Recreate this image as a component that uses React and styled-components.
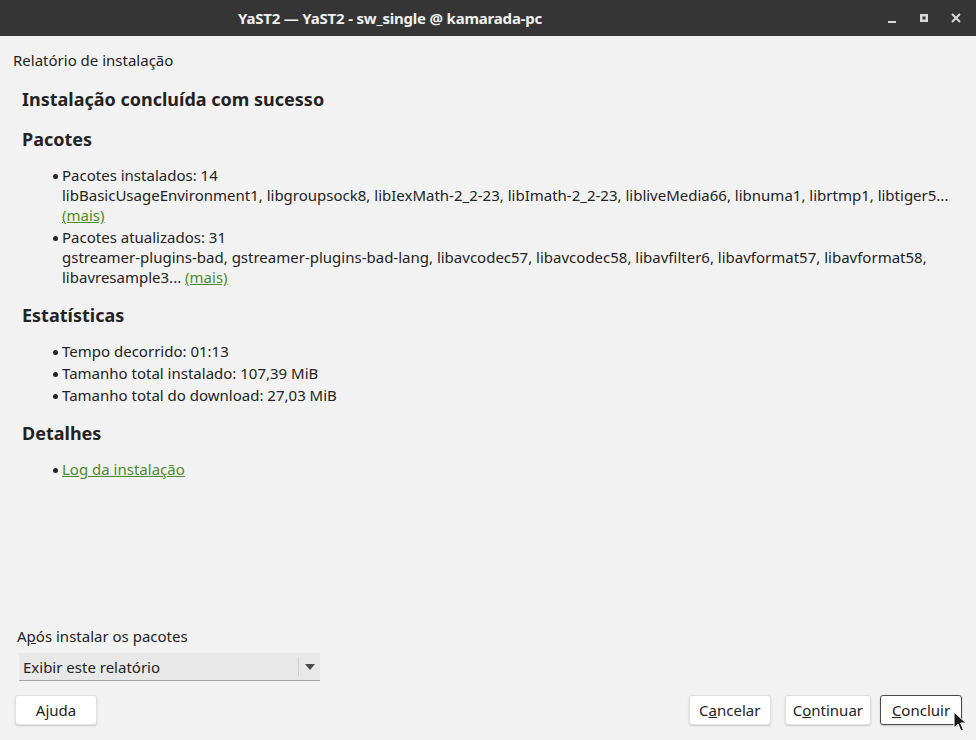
import React from 'react';
import styled, { createGlobalStyle } from 'styled-components';

const GlobalStyle = createGlobalStyle`
  html, body {
    margin: 0;
    padding: 0;
    background: #f2f2f2;
  }
  body {
    font-family: "Noto Sans", "Open Sans", sans-serif;
    color: #232323;
  }
`;

const installed = 'libBasicUsageEnvironment1, libgroupsock8, libIexMath-2_2-23, libImath-2_2-23, libliveMedia66, libnuma1, librtmp1, libtiger5...';
const updated = 'gstreamer-plugins-bad, gstreamer-plugins-bad-lang, libavcodec57, libavcodec58, libavfilter6, libavformat57, libavformat58, libavresample3...';

function App() {
  return (
    <>
      <GlobalStyle />
      <Window>
        <TitleBar>
          <Title>YaST2 — YaST2 - sw_single @ kamarada-pc</Title>
          <WinButtons>
            <svg width="12" height="12" viewBox="0 0 12 12">
              <rect x="2" y="9" width="8" height="2" fill="#d8d8d8" />
            </svg>
            <svg width="12" height="12" viewBox="0 0 12 12">
              <rect x="2" y="2" width="8" height="8" fill="#d8d8d8" />
              <rect x="4.5" y="4.5" width="3" height="3" fill="#353535" />
            </svg>
            <svg width="12" height="12" viewBox="0 0 12 12">
              <path d="M2 2 L10 10 M10 2 L2 10" stroke="#d8d8d8" strokeWidth="2" />
            </svg>
          </WinButtons>
        </TitleBar>

        <Body>
          <Caption>Relatório de instalação</Caption>
          <Report>
            <Heading>Instalação concluída com sucesso</Heading>

            <Heading>Pacotes</Heading>
            <List>
              <Item>
                Pacotes instalados: 14
                <br />
                {installed}
                <br />
                <Link>(mais)</Link>
              </Item>
              <Item>
                Pacotes atualizados: 31
                <br />
                {updated} <Link>(mais)</Link>
              </Item>
            </List>

            <Heading>Estatísticas</Heading>
            <List>
              <Item>Tempo decorrido: 01:13</Item>
              <Item>Tamanho total instalado: 107,39 MiB</Item>
              <Item>Tamanho total do download: 27,03 MiB</Item>
            </List>

            <Heading>Detalhes</Heading>
            <List>
              <Item><Link>Log da instalação</Link></Item>
            </List>
          </Report>

          <AfterBlock>
            <FieldLabel>A<u>p</u>ós instalar os pacotes</FieldLabel>
            <Combo>
              <span>Exibir este relatório</span>
              <ComboArrow>
                <svg width="10" height="6" viewBox="0 0 10 6">
                  <path d="M0 0 H10 L5 6 Z" fill="#4a4a4a" />
                </svg>
              </ComboArrow>
            </Combo>
          </AfterBlock>

          <Footer>
            <Button>Ajuda</Button>
            <Spacer />
            <Button $spaced>C<u>a</u>ncelar</Button>
            <Button>C<u>o</u>ntinuar</Button>
            <Button $focused><u>C</u>oncluir</Button>
          </Footer>
        </Body>

        <Cursor width="14" height="22" viewBox="0 0 14 22">
          <path d="M1 1 L1 17 L5 13 L8 20 L10.5 19 L7.5 12 L13 12 Z" fill="#1a1a1a" stroke="#ffffff" strokeWidth="1" />
        </Cursor>
      </Window>
    </>
  );
}

const Window = styled.div`
  position: relative;
  width: 976px;
  height: 740px;
  display: flex;
  flex-direction: column;
  overflow: hidden;
  background: #f2f2f2;
`;

const TitleBar = styled.div`
  height: 36px;
  flex: none;
  background: #353535;
  display: flex;
  align-items: center;
  padding-left: 238px;
  padding-right: 14px;
`;

const Title = styled.div`
  flex: 1;
  color: #f0f0f0;
  font-weight: 700;
  font-size: 15px;
  letter-spacing: -0.2px;
`;

const WinButtons = styled.div`
  display: flex;
  gap: 20px;
  align-items: center;
  svg {
    display: block;
  }
`;

const Body = styled.div`
  flex: 1;
  display: flex;
  flex-direction: column;
  padding: 14px 14px 15px 13px;
`;

const Caption = styled.div`
  font-size: 15px;
  line-height: 20px;
`;

const Report = styled.div`
  flex: 1;
  padding: 14px 0 0 9px;
`;

const Heading = styled.h2`
  margin: 0 0 10px;
  font-size: 18px;
  font-weight: 700;
  line-height: 30px;
`;

const List = styled.ul`
  margin: 0 0 13px;
  padding: 1px 0 0 40px;
  list-style: none;
`;

const Item = styled.li`
  position: relative;
  font-size: 15px;
  line-height: 20px;
  margin-bottom: 2px;
  &::before {
    content: '';
    position: absolute;
    left: -9px;
    top: 9px;
    width: 5px;
    height: 5px;
    border-radius: 50%;
    background: #232323;
  }
`;

const Link = styled.a`
  color: #4e8a2e;
  text-decoration: underline;
  cursor: pointer;
`;

const AfterBlock = styled.div`
  padding-left: 4px;
  margin-bottom: 14px;
`;

const FieldLabel = styled.div`
  font-size: 15px;
  line-height: 20px;
  margin-bottom: 7px;
`;

const Combo = styled.div`
  width: 301px;
  height: 28px;
  margin-left: 2px;
  box-sizing: border-box;
  background: #e8e8e8;
  border-bottom: 1px solid #a8a8a8;
  display: flex;
  align-items: center;
  padding-left: 4px;
  font-size: 15px;
`;

const ComboArrow = styled.div`
  margin-left: auto;
  width: 21px;
  height: 19px;
  border-left: 1px solid #d0d0d0;
  display: flex;
  align-items: center;
  justify-content: center;
`;

const Footer = styled.div`
  display: flex;
  align-items: center;
  gap: 9px;
  padding-left: 2px;
`;

const Spacer = styled.div`
  flex: 1;
`;

const Button = styled.button`
  font-family: "Noto Sans", "Open Sans", sans-serif;
  font-size: 15px;
  color: #232323;
  height: 30px;
  min-width: 82px;
  padding: 0 7px;
  margin-right: ${p => (p.$spaced ? '5px' : '0')};
  background: #ffffff;
  border-radius: 3px;
  border: 1px solid ${p => (p.$focused ? '#4a4a4a' : '#e0e0e0')};
  box-shadow: 0 1px 2px rgba(0, 0, 0, 0.18);
`;

const Cursor = styled.svg`
  position: absolute;
  left: 953px;
  top: 711px;
`;

export default App;
